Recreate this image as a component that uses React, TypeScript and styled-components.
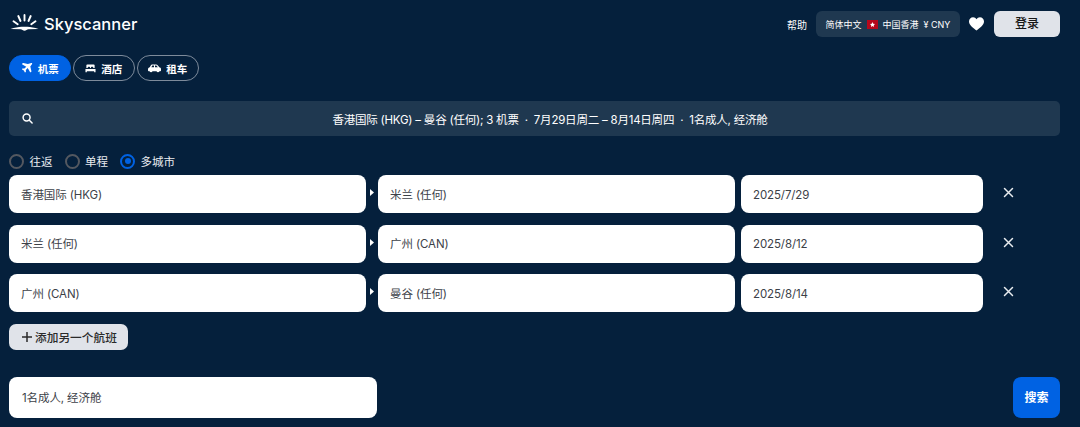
import React from "react";
import styled, { createGlobalStyle } from "styled-components";

const Global = createGlobalStyle`
  html, body { margin: 0; padding: 0; background: #05203c; }
  body { font-family: "Inter", "Noto Sans CJK SC", sans-serif; width: 1080px; height: 427px; overflow: hidden; }
  * { box-sizing: border-box; }
`;

const Page = styled.div`
  width: 1080px;
  height: 427px;
  background: #05203c;
  padding: 0 20px 0 9px;
  overflow: hidden;
`;

const Header = styled.header`
  height: 55px;
  display: flex;
  align-items: flex-start;
  justify-content: space-between;
  padding-top: 11px;
`;

const Logo = styled.div`
  display: flex;
  align-items: center;
  gap: 5px;
  color: #fff;
  font-family: "Inter", sans-serif;
  font-size: 16.5px;
  font-weight: 500;
  height: 26px;
  padding-left: 1px;
  svg { margin-bottom: 3px; }
`;

const HeaderRight = styled.div`
  display: flex;
  align-items: center;
  gap: 9px;
`;

const HelpLink = styled.span`
  color: #fff;
  font-size: 10px;
`;

const LocaleBox = styled.div`
  width: 144px;
  height: 26px;
  border-radius: 6px;
  background: #1f3850;
  color: #fff;
  font-size: 9px;
  display: flex;
  align-items: center;
  justify-content: center;
  gap: 5px;
`;

const Flag = styled.span`
  width: 11px;
  height: 9px;
  background: #b5071b;
  display: inline-flex;
  align-items: center;
  justify-content: center;
`;

const HeartWrap = styled.span`
  display: flex;
  margin-right: 1px;
`;

const LoginButton = styled.button`
  width: 66px;
  height: 26px;
  border: 0;
  border-radius: 6px;
  background: #e0e3e9;
  color: #161616;
  font: 500 12px/24px "Inter", "Noto Sans CJK SC", sans-serif;
  padding: 0 0 1px;
`;

const Tabs = styled.nav`
  display: flex;
  gap: 2.5px;
  height: 26px;
`;

const Tab = styled.div<{ $active?: boolean }>`
  width: 61.5px;
  height: 26px;
  border-radius: 13px;
  display: flex;
  align-items: center;
  justify-content: center;
  gap: 5px;
  color: #fff;
  font-size: 10.5px;
  font-weight: 600;
  background: ${(p) => (p.$active ? "#0062e3" : "transparent")};
  border: 1px solid ${(p) => (p.$active ? "#0062e3" : "#7e8b9b")};
`;

const Summary = styled.div`
  margin-top: 20px;
  height: 35px;
  border-radius: 5px;
  background: #1f3850;
  position: relative;
  display: flex;
  align-items: center;
  justify-content: center;
  color: #fff;
  font-size: 11.5px;
  letter-spacing: -0.22px;
  white-space: pre;
  padding-left: 31px;
`;

const SearchIcon = styled.span`
  position: absolute;
  left: 13px;
  top: 12px;
  display: flex;
`;

const TripTypes = styled.div`
  margin-top: 17px;
  height: 16px;
  display: flex;
  align-items: center;
  gap: 12px;
`;

const RadioLabel = styled.label`
  display: flex;
  align-items: center;
  gap: 5.5px;
  color: #e9ecf0;
  font-size: 11.5px;
`;

const RadioDot = styled.span<{ $on?: boolean }>`
  width: 15px;
  height: 15px;
  border-radius: 50%;
  border: ${(p) => (p.$on ? "2.5px solid #0062e3" : "2px solid #545860")};
  display: flex;
  align-items: center;
  justify-content: center;
  &::after {
    content: "";
    display: ${(p) => (p.$on ? "block" : "none")};
    width: 6px;
    height: 6px;
    border-radius: 50%;
    background: #0062e3;
  }
`;

const Legs = styled.div`
  margin-top: 6px;
  display: flex;
  flex-direction: column;
  gap: 11.5px;
`;

const Leg = styled.div`
  display: flex;
  align-items: center;
  height: 38px;
`;

const Field = styled.div<{ $w: number }>`
  width: ${(p) => p.$w}px;
  height: 38px;
  flex: none;
  background: #fff;
  border-radius: 8px;
  display: flex;
  align-items: center;
  padding: 1px 0 0 12px;
  color: #3c4148;
  font-size: 11.5px;
  line-height: 16px;
  letter-spacing: -0.1px;
`;

const Arrow = styled.span`
  width: 12px;
  flex: none;
  display: flex;
  justify-content: center;
  margin-top: -3px;
`;

const Spacer = styled.span`
  width: 6px;
  flex: none;
`;

const Remove = styled.span`
  margin: -3px 0 0 20px;
  display: flex;
`;

const AddButton = styled.button`
  margin-top: 12px;
  width: 119px;
  height: 26px;
  border: 0;
  border-radius: 7px;
  background: #e0e3e9;
  color: #2a2a2a;
  display: flex;
  align-items: center;
  gap: 2px;
  padding: 0 0 1px 12px;
  font: 500 11.7px "Inter", "Noto Sans CJK SC", sans-serif;
`;

const Footer = styled.div`
  margin-top: 27px;
  display: flex;
  justify-content: space-between;
`;

const Travellers = styled.div`
  width: 368px;
  height: 41px;
  background: #fff;
  border-radius: 8px;
  display: flex;
  align-items: center;
  padding: 0 0 2px 13px;
  color: #3c4148;
  font-size: 11.5px;
  letter-spacing: -0.1px;
`;

const SearchButton = styled.button`
  width: 47px;
  height: 41px;
  border: 0;
  border-radius: 8px;
  background: #0062e3;
  color: #fff;
  padding: 0 0 2px;
  font: 600 12px "Inter", "Noto Sans CJK SC", sans-serif;
`;

const SkyLogo = () => (
  <svg width="29" height="17" viewBox="0 0 28 17" fill="#fff">
    <path d="M0 15C4 13.8 8 12.8 11 12.8L17 12.8C20 12.8 24 13.8 28 15L18 15.2C16.5 15.3 15.5 16.8 14 16.8C12.5 16.8 11.5 15.3 10 15.2Z" />
    <g stroke="#fff" strokeWidth="1.9" strokeLinecap="round" fill="none">
      <path d="M14 1v5.500" />
      <path d="M7.800 2l2.200 5" />
      <path d="M20.200 2l-2.200 5" />
      <path d="M3 7.200l4.200 3" />
      <path d="M25 7.200l-4.200 3" />
    </g>
  </svg>
);

const PlaneIcon = () => (
  <svg width="12" height="12" viewBox="0 0 24 24" fill="#fff">
    <path d="M20.600 2.200c1-.6 2.200.5 1.600 1.600l-3.600 5.100 2.300 9.400c.1.500 0 .9-.4 1.200l-1 .8c-.5.400-1.200.2-1.500-.3l-4.600-7.900-3.800 3.800.3 3.100c0 .4-.1.700-.4 1l-.6.600c-.4.400-1.100.3-1.400-.2l-1.800-3.400-3.400-1.800c-.5-.3-.6-1-.2-1.400l.6-.6c.3-.3.600-.4 1-.4l3.100.3 3.800-3.800L2.700 4.800c-.5-.3-.7-1-.3-1.500l.8-1c.3-.4.700-.5 1.200-.4l9.400 2.300z" />
  </svg>
);

const BedIcon = () => (
  <svg width="11" height="11" viewBox="0 0 24 24" fill="#fff">
    <path d="M5 3h14a2 2 0 0 1 2 2v6h-3V9.500A1.500 1.500 0 0 0 16.500 8h-2A1.500 1.500 0 0 0 13 9.500V11h-2V9.500A1.500 1.500 0 0 0 9.500 8h-2A1.500 1.500 0 0 0 6 9.500V11H3V5a2 2 0 0 1 2-2z" />
    <path d="M1 13h22v7h-3v-2H4v2H1z" />
  </svg>
);

const CarIcon = () => (
  <svg width="13" height="9" viewBox="0 0 26 18" fill="#fff">
    <path fillRule="evenodd" d="M8 1h8c1.500 0 2.800.7 3.800 2l2.700 3.500c2 .4 3.500 1.600 3.500 3.500v3c0 .8-.6 1.500-1.500 1.500h-1.600a3 3 0 0 1-5.800 0H9a3 3 0 0 1-5.800 0H1.500C.6 14.500 0 13.800 0 13v-2.500C0 8.500 1.500 7 3.500 6.500L5.800 2.500C6.300 1.500 7 1 8 1zm.500 2.200L6.800 6.400H12V3.200zm5.500 0v3.200h5.800L17.500 3.800c-.4-.4-1-.6-1.500-.6z" />
  </svg>
);

const Close = () => (
  <svg width="11" height="11" viewBox="0 0 11 11" stroke="#e9ecf0" strokeWidth="1.500" strokeLinecap="round">
    <path d="M1.500 1.500l8 8M9.500 1.500l-8 8" />
  </svg>
);

const legs = [
  ["香港国际 (HKG)", "米兰 (任何)", "2025/7/29"],
  ["米兰 (任何)", "广州 (CAN)", "2025/8/12"],
  ["广州 (CAN)", "曼谷 (任何)", "2025/8/14"],
];

export default function App() {
  return (
    <Page>
      <Global />
      <Header>
        <Logo>
          <SkyLogo />
          <span>Skyscanner</span>
        </Logo>
        <HeaderRight>
          <HelpLink>帮助</HelpLink>
          <LocaleBox>
            <span>简体中文</span>
            <Flag>
              <svg width="5" height="5" viewBox="0 0 10 10" fill="#fff">
                <path d="M5 0l1.500 3.500L10 4 7.500 6.500 8 10 5 8.200 2 10l.5-3.500L0 4l3.500-.5z" />
              </svg>
            </Flag>
            <span>中国香港</span>
            <span>¥ CNY</span>
          </LocaleBox>
          <HeartWrap>
            <svg width="15" height="14" viewBox="0 0 24 22" fill="#fff">
              <path d="M12 21.500C8 18 0 13 0 6.800 0 3 3 0 6.500 0 8.800 0 10.900 1.200 12 3.200 13.100 1.200 15.200 0 17.500 0 21 0 24 3 24 6.800 24 13 16 18 12 21.500z" />
            </svg>
          </HeartWrap>
          <LoginButton>登录</LoginButton>
        </HeaderRight>
      </Header>
      <Tabs>
        <Tab $active>
          <PlaneIcon />
          <span>机票</span>
        </Tab>
        <Tab>
          <BedIcon />
          <span>酒店</span>
        </Tab>
        <Tab>
          <CarIcon />
          <span>租车</span>
        </Tab>
      </Tabs>
      <Summary>
        <SearchIcon>
          <svg width="11" height="11" viewBox="0 0 12 12" fill="none" stroke="#fff" strokeWidth="1.600" strokeLinecap="round">
            <circle cx="5" cy="5" r="3.800" />
            <path d="M8 8l3 3" />
          </svg>
        </SearchIcon>
        <span>{"香港国际 (HKG) – 曼谷 (任何); 3 机票  ·  7月29日周二 – 8月14日周四  ·  1名成人, 经济舱"}</span>
      </Summary>
      <TripTypes>
        <RadioLabel>
          <RadioDot />
          往返
        </RadioLabel>
        <RadioLabel>
          <RadioDot />
          单程
        </RadioLabel>
        <RadioLabel>
          <RadioDot $on />
          多城市
        </RadioLabel>
      </TripTypes>
      <Legs>
        {legs.map(([from, to, date]) => (
          <Leg key={date}>
            <Field $w={357}>{from}</Field>
            <Arrow>
              <svg width="4" height="7" viewBox="0 0 4 7" fill="#fff">
                <path d="M0 0l4 3.500L0 7z" />
              </svg>
            </Arrow>
            <Field $w={357}>{to}</Field>
            <Spacer />
            <Field $w={242}>{date}</Field>
            <Remove>
              <Close />
            </Remove>
          </Leg>
        ))}
      </Legs>
      <AddButton>
        <svg width="12" height="12" viewBox="0 0 12 12" stroke="#2a2a2a" strokeWidth="1.500">
          <path d="M6 1v10M1 6h10" />
        </svg>
        <span>添加另一个航班</span>
      </AddButton>
      <Footer>
        <Travellers>1名成人, 经济舱</Travellers>
        <SearchButton>搜索</SearchButton>
      </Footer>
    </Page>
  );
}
